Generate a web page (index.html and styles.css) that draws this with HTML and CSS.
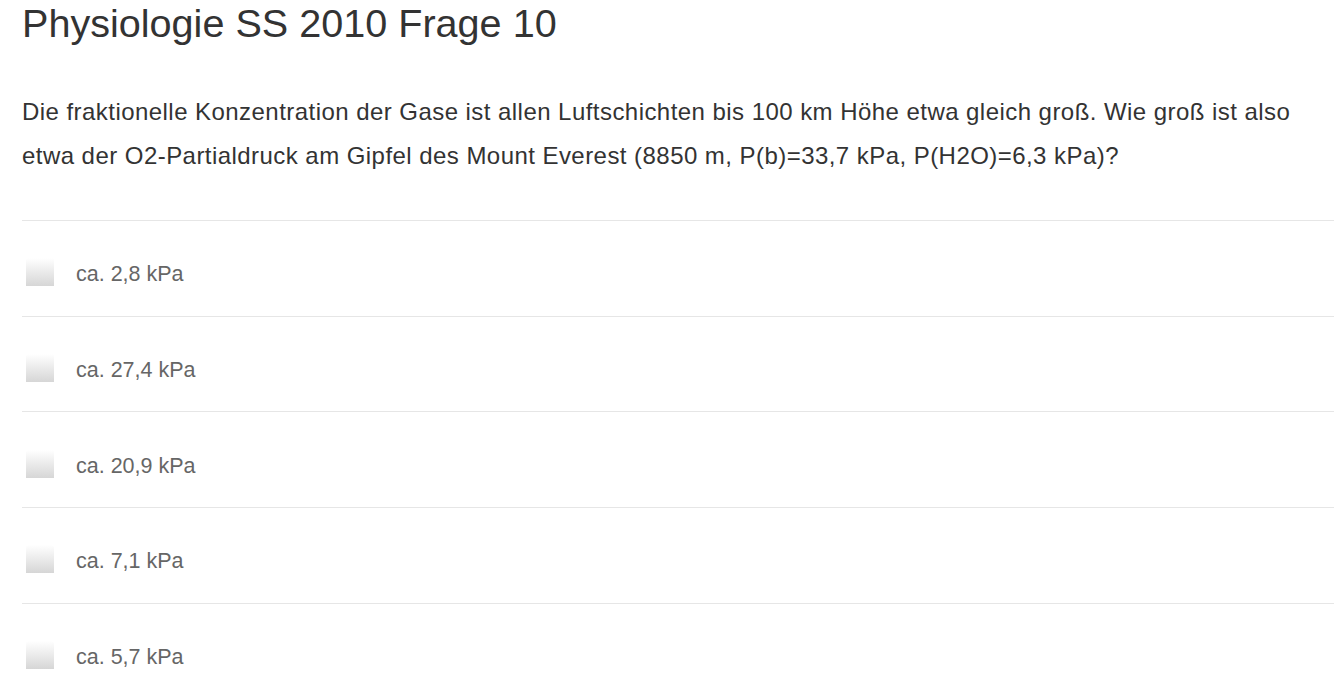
FILE: index.html
```html
<!DOCTYPE html>
<html lang="de">
<head>
<meta charset="utf-8">
<title>Physiologie SS 2010 Frage 10</title>
<link rel="stylesheet" href="styles.css">
</head>
<body>
<main class="page">
  <h1 class="title">Physiologie SS 2010 Frage 10</h1>
  <p class="question">Die fraktionelle Konzentration der Gase ist allen Luftschichten bis 100 km Höhe etwa gleich groß. Wie groß ist also etwa der O2-Partialdruck am Gipfel des Mount Everest (8850 m, P(b)=33,7 kPa, P(H2O)=6,3 kPa)?</p>
  <ul class="answers">
    <li class="answer"><span class="box"></span><span class="label">ca. 2,8 kPa</span></li>
    <li class="answer"><span class="box"></span><span class="label">ca. 27,4 kPa</span></li>
    <li class="answer"><span class="box"></span><span class="label">ca. 20,9 kPa</span></li>
    <li class="answer"><span class="box"></span><span class="label">ca. 7,1 kPa</span></li>
    <li class="answer"><span class="box"></span><span class="label">ca. 5,7 kPa</span></li>
  </ul>
</main>
</body>
</html>
```
FILE: styles.css
```css
html, body {
  margin: 0;
  padding: 0;
  background: #fff;
}
body {
  font-family: "Liberation Sans", Arial, Helvetica, sans-serif;
  overflow: hidden;
}
.page {
  padding-left: 22px;
}
.title {
  margin: 0;
  padding-top: 1px;
  font-size: 39.6px;
  line-height: 44px;
  font-weight: normal;
  color: #333;
}
.question {
  margin: 45px 0 0 0;
  font-size: 24px;
  line-height: 44px;
  letter-spacing: 0.45px;
  color: #333;
}
.answers {
  list-style: none;
  margin: 42px 0 0 0;
  padding: 0;
  border-top: 1px solid #e6e6e6;
}
.answer {
  display: flex;
  align-items: center;
  height: 95.7px;
  border-bottom: 1px solid #e6e6e6;
  padding-left: 4px;
  padding-top: 8px;
  box-sizing: border-box;
}
.box {
  width: 28px;
  height: 28px;
  flex: none;
  border-radius: 3px 3px 0 0;
  background: linear-gradient(#ffffff, #d6d6d6);
}
.label {
  margin-left: 22px;
  padding-top: 5px;
  font-size: 21.5px;
  color: #666;
}
```
